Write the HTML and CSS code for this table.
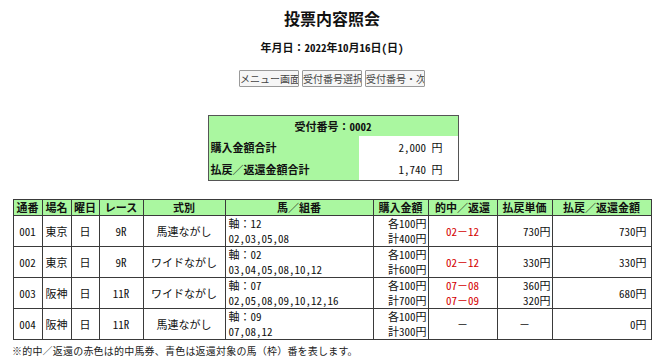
FILE: index.html
```html
<!DOCTYPE html>
<html lang="ja">
<head>
<meta charset="utf-8">
<link rel="stylesheet" href="styles.css">
</head>
<body>
<div class="page">
  <h1 class="title">投票内容照会</h1>
  <p class="date">年月日<span class="fw">：</span>2022年10月16日(日)</p>
  <div class="buttons">
    <button class="btn">メニュー画面</button>
    <button class="btn">受付番号選択</button>
    <button class="btn">受付番号・次</button>
  </div>
  <table class="summary">
    <tr><th colspan="2" class="sum-head">受付番号<span class="fw">：</span>0002</th></tr>
    <tr><th class="sum-label">購入金額合計</th><td class="sum-val">2,000 円</td></tr>
    <tr><th class="sum-label">払戻<span class="fw">／</span>返還金額合計</th><td class="sum-val">1,740 円</td></tr>
  </table>
  <table class="list">
    <colgroup>
      <col class="c1"><col class="c2"><col class="c3"><col class="c4"><col class="c5">
      <col class="c6"><col class="c7"><col class="c8"><col class="c9"><col class="c10">
    </colgroup>
    <thead>
      <tr>
        <th>通番</th><th>場名</th><th>曜日</th><th>レース</th><th>式別</th>
        <th>馬<span class="fw">／</span>組番</th><th>購入金額</th><th>的中<span class="fw">／</span>返還</th><th>払戻単価</th><th>払戻<span class="fw">／</span>返還金額</th>
      </tr>
    </thead>
    <tbody>
      <tr>
        <td class="ctr">001</td><td class="ctr">東京</td><td class="ctr">日</td><td class="ctr">9R</td><td class="ctr">馬連ながし</td>
        <td class="lft">軸<span class="fw">：</span>12<br>02,03,05,08</td>
        <td class="rgt">各100円<br>計400円</td>
        <td class="ctr hit">02<span class="fw">－</span>12</td>
        <td class="rgt">730円</td>
        <td class="rgt pr">730円</td>
      </tr>
      <tr>
        <td class="ctr">002</td><td class="ctr">東京</td><td class="ctr">日</td><td class="ctr">9R</td><td class="ctr">ワイドながし</td>
        <td class="lft">軸<span class="fw">：</span>02<br>03,04,05,08,10,12</td>
        <td class="rgt">各100円<br>計600円</td>
        <td class="ctr hit">02<span class="fw">－</span>12</td>
        <td class="rgt">330円</td>
        <td class="rgt pr">330円</td>
      </tr>
      <tr>
        <td class="ctr">003</td><td class="ctr">阪神</td><td class="ctr">日</td><td class="ctr">11R</td><td class="ctr">ワイドながし</td>
        <td class="lft">軸<span class="fw">：</span>07<br>02,05,08,09,10,12,16</td>
        <td class="rgt">各100円<br>計700円</td>
        <td class="ctr hit">07<span class="fw">－</span>08<br>07<span class="fw">－</span>09</td>
        <td class="rgt">360円<br>320円</td>
        <td class="rgt pr">680円</td>
      </tr>
      <tr>
        <td class="ctr">004</td><td class="ctr">阪神</td><td class="ctr">日</td><td class="ctr">11R</td><td class="ctr">馬連ながし</td>
        <td class="lft">軸<span class="fw">：</span>09<br>07,08,12</td>
        <td class="rgt">各100円<br>計300円</td>
        <td class="ctr"><span class="fw">－</span></td>
        <td class="ctr"><span class="fw">－</span></td>
        <td class="rgt pr">0円</td>
      </tr>
    </tbody>
  </table>
  <p class="note">※的中<span class="fw">／</span>返還の赤色は的中馬券、青色は返還対象の馬<span class="fw">（</span>枠<span class="fw">）</span>番を表します。</p>
</div>
</body>
</html>
```

FILE: styles.css
```css
html, body {
  margin: 0;
  padding: 0;
  background: #ffffff;
}
body {
  font-family: "Noto Sans CJK JP", "Noto Sans", sans-serif;
  font-feature-settings: "hwid" 1;
  color: #111;
}
.fw {
  font-feature-settings: "hwid" 0;
}
.page {
  margin-left: 13px;
  width: 638px;
  display: flex;
  flex-direction: column;
  align-items: center;
}
.title {
  margin: 8px 0 0 0;
  font-size: 16px;
  line-height: 20px;
  font-weight: bold;
}
.date {
  margin: 12px 0 0 0;
  font-size: 11px;
  line-height: 14px;
  font-weight: bold;
}
.buttons {
  margin-top: 16px;
  display: flex;
  gap: 3px;
}
.btn {
  width: 60px;
  height: 17px;
  padding: 0;
  margin: 0;
  font-family: inherit;
  font-feature-settings: "hwid" 1;
  font-size: 10px;
  line-height: 15px;
  color: #444;
  background: #f6f6f6;
  border: 1px solid #9a9a9a;
  border-radius: 1px;
  white-space: nowrap;
  overflow: hidden;
}
.summary {
  margin-top: 28px;
  margin-left: 2px;
  width: 251px;
  border-collapse: collapse;
  border: 1px solid #555;
  font-size: 11px;
}
.summary th, .summary td {
  padding: 0;
}
.sum-head {
  background: #aaf7a0;
  height: 20px;
  line-height: 20px;
  text-align: center;
  font-weight: bold;
}
.sum-label {
  background: #aaf7a0;
  width: 148px;
  height: 22px;
  text-align: left;
  padding-left: 2px !important;
  font-weight: bold;
}
.sum-val {
  background: #ffffff;
  text-align: right;
  padding-right: 15px !important;
  font-weight: normal;
}
.list {
  margin-top: 18px;
  width: 638px;
  border-collapse: collapse;
  table-layout: fixed;
  font-size: 11px;
}
.c1 { width: 29px; }
.c2 { width: 29px; }
.c3 { width: 28px; }
.c4 { width: 44px; }
.c5 { width: 82px; }
.c6 { width: 148px; }
.c7 { width: 55px; }
.c8 { width: 69px; }
.c9 { width: 55px; }
.c10 { width: 99px; }
.list th, .list td {
  border: 1px solid #3a3a3a;
  padding: 0;
  line-height: 15px;
  white-space: nowrap;
  overflow: hidden;
}
.list th {
  background: #aaf7a0;
  font-weight: bold;
  text-align: center;
  height: 15px;
}
.list td {
  height: 30px;
}
.ctr { text-align: center; }
.lft { text-align: left; padding-left: 3px !important; }
.rgt { text-align: right; padding-right: 1px !important; }
.pr { padding-right: 4px !important; }
.hit { color: #d40000; }
.note {
  align-self: flex-start;
  margin: 4px 0 0 -1px;
  font-size: 10px;
  line-height: 13px;
  letter-spacing: 0.2px;
  color: #222;
}
```
